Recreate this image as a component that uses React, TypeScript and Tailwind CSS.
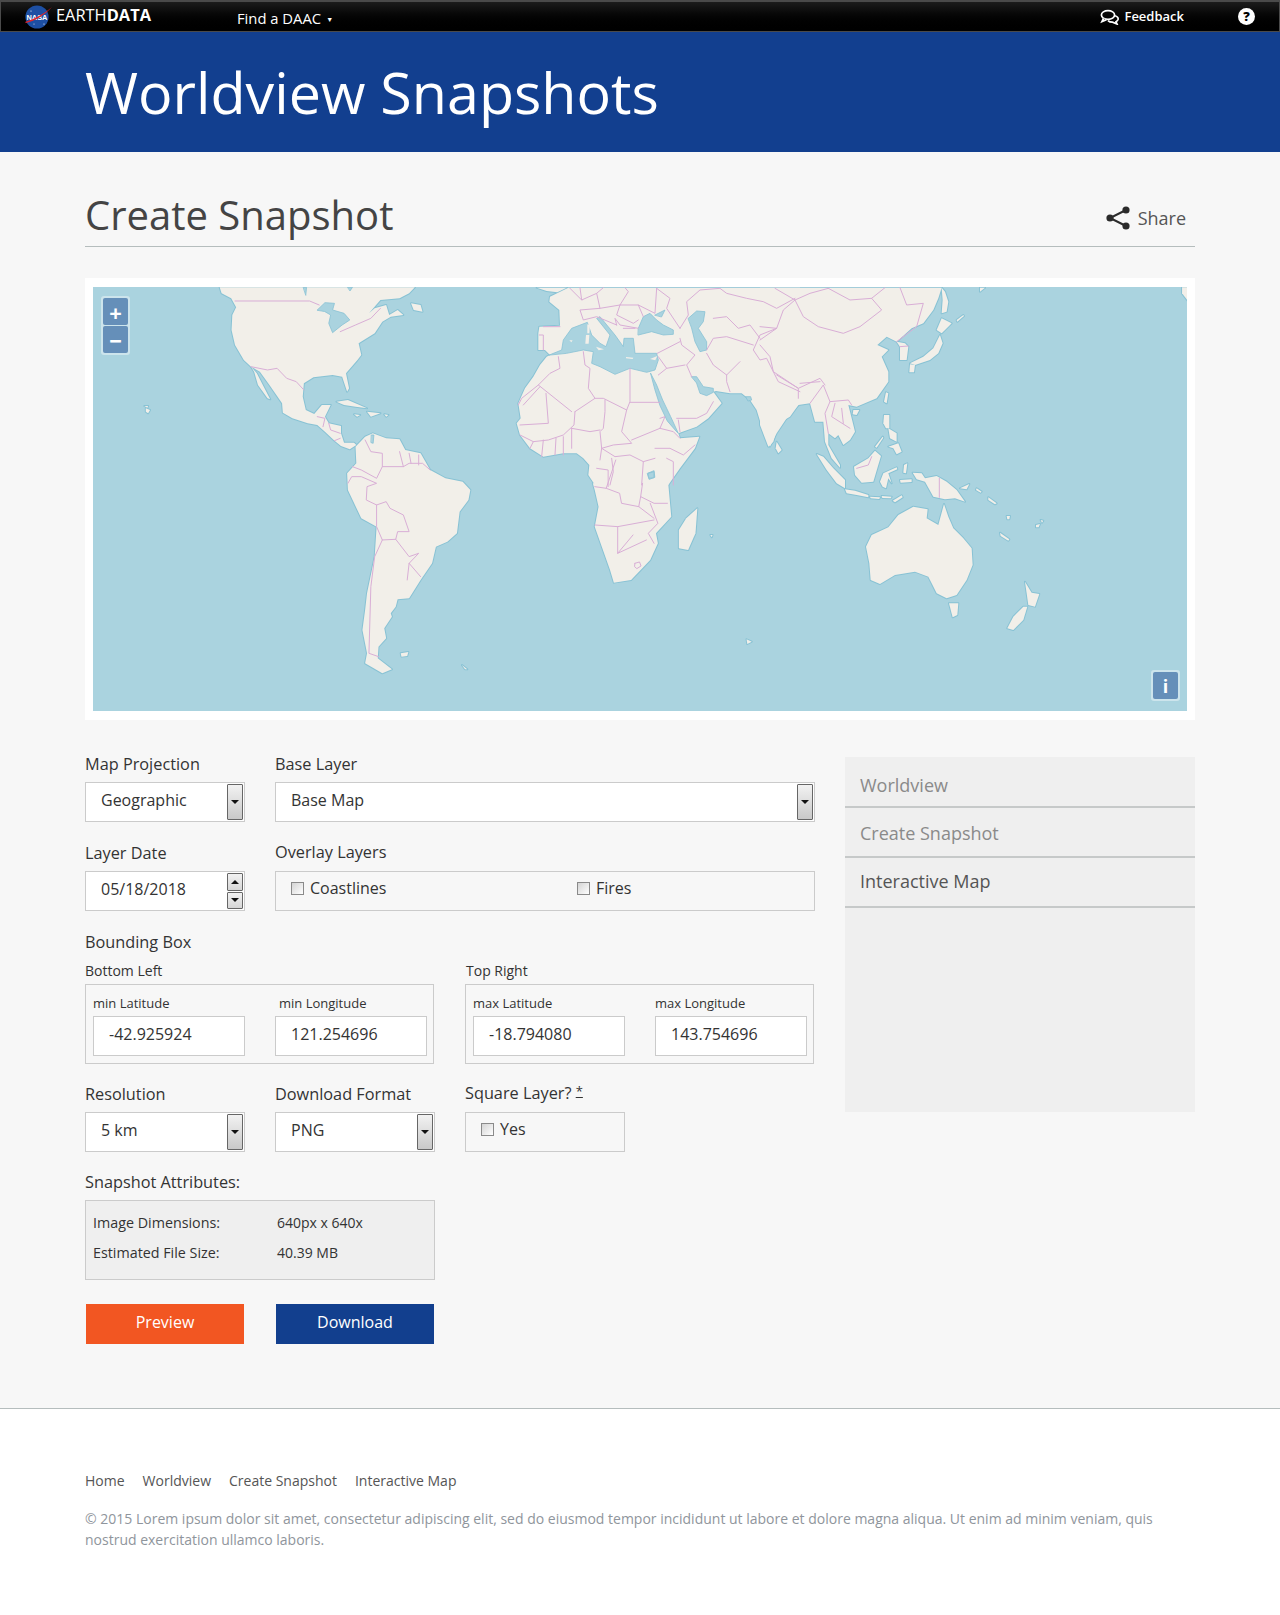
const FONT = "font-['Open_Sans',sans-serif]";

type MapGroup = {
  transform: string;
  land: string[];
  water: string[];
  borders: string[];
};

const mapGroups: MapGroup[] = [
  {
    // Americas and southern Africa
    transform: "translate(80 270) scale(0.3827 0.3333)",
    land: [
      "365,52 370,70 395,85 408,112 398,135 396,180 405,225 428,270 447,290 470,305 495,345 528,400 530,428 555,445 595,460 620,465 640,485 665,512 682,528 705,538 722,525 716,518 690,518 682,490 682,468 650,460 640,440 655,405 632,405 612,432 590,420 582,380 585,340 610,322 660,315 685,320 698,365 703,355 695,310 725,270 735,255 728,220 770,190 790,155 812,140 845,135 830,120 808,135 800,105 770,115 755,130 785,90 835,85 860,70 875,52",
      "447,290 462,310 480,350 497,388 490,385 465,345 455,305",
      "865,100 890,105 895,125 872,120",
      "670,395 700,390 750,415 720,410 690,405",
      "750,425 785,430 760,440",
      "716,433 732,435 724,440",
      "795,433 806,435 800,440",
      "172,415 183,420 178,430 172,425",
      "168,408 178,408 176,413",
      "838,1150 858,1146 855,1158 840,1160",
      "998,1185 1012,1198 1006,1198",
      "720,530 745,500 765,490 800,505 835,508 850,540 890,550 915,600 955,625 1000,635 1020,660 1015,690 992,725 985,790 960,815 930,830 920,880 890,930 860,985 830,988 825,1010 812,1030 815,1040 795,1075 800,1105 780,1130 778,1165 815,1198 790,1210 745,1180 750,1150 738,1080 745,1020 750,970 770,860 775,770 735,745 700,660 698,610 722,580",
      "1340,640 1345,660 1355,710 1345,770 1385,900 1395,938 1440,930 1490,870 1510,820 1505,790 1545,740 1537,640",
    ],
    water: [
      "620,120 640,98 665,100 660,120 690,130 705,150 685,165 660,188 650,160 655,135 640,125",
      "584,52 592,52 590,75",
      "700,52 712,52 706,62",
      "762,495 768,495 766,520 761,518",
      "1483,610 1500,602 1502,622 1488,628",
    ],
    borders: [
      "405,93 600,93 625,105",
      "680,185 720,165 760,145 785,115",
      "447,290 490,300 515,295 540,325 565,335 585,360",
      "620,440 640,445 635,470",
      "650,460 655,480 680,490",
      "665,512 680,505",
      "745,510 760,545 790,550 790,590 845,590 835,545",
      "845,590 860,580 895,580 915,600",
      "860,550 865,580",
      "885,555 885,585",
      "790,590 775,625 735,600 712,590",
      "700,640 710,620 735,620 775,640 750,650 748,690 775,705 800,695 810,715 845,735 860,785 830,785 825,808 860,860 885,850 860,880 855,930",
      "860,880 890,920",
      "775,705 775,770 790,810 770,860 760,950 755,1150 780,1160",
      "825,808 790,810",
      "1345,650 1375,655 1410,670 1415,700 1460,710 1500,745",
      "1375,655 1400,570",
      "1345,765 1405,770 1500,750",
      "1405,770 1405,850 1480,810",
      "1470,640 1465,680 1500,700 1535,700",
      "1465,680 1460,710",
      "1490,700 1510,760 1485,790 1500,820",
      "1405,850 1445,795",
      "1350,595 1380,600 1380,650",
      "1450,880 1462,876 1466,888 1455,896 1449,890 1450,880",
    ],
  },
  {
    // Europe, Africa north, middle east
    transform: "translate(500 285) scale(0.3333)",
    land: [
      "205,8 150,35 148,50 178,75 180,122 118,125 115,145 115,195 135,195 150,210 140,215 120,240 100,275 75,310 55,355 62,400 50,415 60,450 90,490 130,515 190,505 230,505 250,520 268,540 265,570 285,600 505,600 540,550 585,490 598,455 540,460 535,445 590,425 625,400 665,355 640,320 648,318 690,325 725,325 750,345 770,375 790,440 810,485 830,445 860,400 900,355 900,8",
      "110,8 170,8 200,8 172,22 140,18",
      "830,470 845,495 835,505 827,490",
    ],
    water: [
      "148,210 185,195 190,165 215,130 262,112 275,150 300,175 318,185 330,150 290,100 300,95 345,150 370,185 372,160 400,160 405,205 470,205 475,225 465,255 440,262 390,250 345,268 300,245 275,235 280,200 250,195 200,205",
      "415,130 430,95 450,85 470,105 490,120 520,135 520,148 490,150 455,140 415,150",
      "465,90 495,75 485,95",
      "565,100 590,78 615,80 610,110 595,130 620,170 620,195 600,200 585,170 575,130",
      "452,265 470,300 488,345 512,395 535,445 528,438 502,408 480,362 465,315",
      "575,275 590,275 610,305 640,310 640,322 620,332 600,325 590,295",
      "445,565 462,560 462,578 448,580",
      "738,335 752,335 755,345 745,348",
    ],
    borders: [
      "175,215 180,250 150,265 115,300 65,340 55,360",
      "115,300 215,380",
      "120,305 70,360",
      "250,200 255,240 270,250 265,310 285,340 225,380",
      "390,250 390,350 380,375 310,340 285,340",
      "390,352 480,352",
      "138,325 145,415 60,420",
      "225,380 222,420 190,450 145,465 100,470 60,450",
      "315,345 315,380 310,430 300,440 305,490 300,525",
      "380,375 365,440 395,475 340,480 305,490",
      "215,430 270,440 300,435",
      "215,430 215,490",
      "168,460 165,510",
      "190,455 190,510",
      "480,400 495,395 480,430 395,465",
      "480,430 520,440 540,460",
      "465,490 510,490 550,510 585,480",
      "500,520 520,530 520,600",
      "305,490 345,515 390,510 430,530 465,520",
      "335,520 340,560 330,600",
      "430,530 425,600",
      "100,470 90,490",
      "130,465 125,515",
      "540,160 545,180 585,210 560,240 575,275",
      "472,205 540,170",
      "475,215 500,250 475,270",
      "500,250 555,240",
      "530,400 590,400 620,385 640,350",
      "535,405 540,440",
      "690,320 680,290 680,270 720,230",
      "680,270 640,240 620,205",
      "620,195 640,160 680,155 760,180",
      "640,100 680,95 715,130 750,120 780,160",
      "830,130 780,150 760,195 780,225 800,220 835,290 900,320",
      "540,130 565,90 560,50 600,15 660,10 680,25 740,40 790,50 830,70 885,40",
      "240,8 245,45 290,25 300,70 240,75 250,105 290,95 350,120",
      "300,70 360,60 415,60 430,95",
      "360,60 385,20 375,8",
      "415,60 465,85 470,10",
      "290,25 310,8",
      "350,120 345,100 360,120 415,130",
      "370,130 405,130",
      "360,60 350,90 400,115 415,105",
      "245,45 210,10",
      "470,10 510,40 500,70 540,130",
      "130,125 180,125",
      "118,150 130,150 130,195",
    ],
  },
  {
    // East Asia
    transform: "translate(760 285) scale(0.3333)",
    land: [
      "0,8 545,8 535,40 520,75 490,115 455,130 410,170 380,155 352,180 385,195 365,215 385,260 385,290 350,340 290,365 265,360 275,400 285,440 270,465 250,480 235,450 225,460 205,445 205,480 240,540 240,548 215,520 195,470 190,410 165,410 150,355 115,360 90,395 55,415 40,470 25,485 0,420",
      "410,170 435,175 445,185 440,225 420,225 420,185",
      "545,8 555,20 565,50 560,80 545,85 548,45",
      "545,100 575,115 565,125 545,145 530,135",
      "540,150 548,175 535,205 510,225 465,240 450,235 490,215 520,190 535,160",
      "450,238 465,240 462,262 448,262",
      "660,8 675,8 660,20",
      "378,322 385,325 380,355 372,350",
      "280,375 298,375 290,390 278,388",
      "372,390 388,390 388,430 378,430 370,415",
      "385,430 410,445 410,470 390,460",
      "385,485 415,475 425,500 410,508 400,490",
      "345,485 368,455 370,458 350,488",
      "590,105 610,90 612,93 592,110",
    ],
    water: [],
    borders: [
      "0,125 50,130 70,75 105,45 45,10",
      "105,45 130,95 175,125 250,145 300,125 365,75 335,40 375,8",
      "105,45 150,25 205,10",
      "205,10 270,45 335,40",
      "420,8 440,60 490,55 470,125 410,170",
      "0,165 50,130",
      "0,180 30,215 40,260 115,310 180,280 195,300",
      "50,270 115,310 115,340",
      "120,295 180,290",
      "150,355 190,300 210,350 265,345 275,360",
      "210,350 195,385 205,445",
      "225,355 215,395 270,430",
      "245,370 250,415",
      "420,185 445,183",
    ],
  },
  {
    // Indonesia and Oceania
    transform: "translate(800 440) scale(0.3333)",
    land: [
      "50,42 70,50 100,85 135,120 135,145 110,130 80,90",
      "135,148 165,152 205,165 205,172 170,165 140,160",
      "210,170 240,172 238,177 212,175",
      "245,168 275,170 272,175 247,174",
      "278,182 305,166 308,172 285,187",
      "162,80 205,55 225,32 243,48 232,85 220,125 185,128 165,105",
      "250,100 290,82 292,88 265,100 275,130 265,115 258,145 248,140 240,125",
      "300,120 335,118 335,126 302,128",
      "312,75 322,70 318,100 310,98",
      "338,98 365,100 375,115 410,108 440,125 470,150 495,185 465,175 435,178 400,170 375,125 350,118",
      "480,145 508,132 500,148",
      "530,145 545,155 542,158 528,150",
      "565,172 590,190 585,193 565,180",
      "198,320 215,285 265,262 295,225 340,200 383,208 380,235 415,255 432,192 445,230 460,265 490,295 515,325 518,375 500,420 470,465 440,475 410,460 395,430 385,410 345,395 285,405 240,432 212,420 208,370",
      "447,490 475,490 472,525 458,532",
      "675,425 695,458 718,462 705,500 685,495 680,460",
      "670,500 682,500 670,540 640,570 622,565 640,530",
      "600,278 628,298 625,302 602,288",
      "620,228 630,228 628,238 622,238",
      "708,255 720,252 716,262 708,262",
      "722,240 730,242 726,248",
    ],
    water: [],
    borders: ["170,85 205,75 215,50", "418,115 418,172"],
  },
  {
    // Madagascar and the top right corner
    transform: "translate(640 270) scale(0.37 0.3333)",
    land: [
      "155,715 150,790 130,840 105,835 105,780 125,745",
      "1465,52 1480,52 1480,92 1465,70",
      "288,1108 302,1115 290,1122",
      "190,795 196,795 194,802",
    ],
    water: [],
    borders: [],
  },
];

// drawn after the seas, in the Europe group's coordinates
const medIslands = [
  "258,150 268,150 266,176 256,176",
  "262,118 270,120 268,145 262,145",
  "288,185 312,193 296,196",
  "378,216 400,218 398,222 378,220",
  "450,222 472,213 466,226",
  "208,166 218,166 214,172",
];

const WorldMap = () => (
  <svg
    viewBox="93 287 1094 424"
    className="block h-[424px] w-[1094px] bg-[#aad3df] blur-[0.4px]"
    strokeLinejoin="round"
    strokeLinecap="round"
  >
    {mapGroups.map((g, i) => (
      <g key={i} transform={g.transform}>
        {g.land.map((p) => (
          <polygon key={p} points={p} fill="none" stroke="#88c2d4" strokeWidth={2} vectorEffect="non-scaling-stroke" />
        ))}
      </g>
    ))}
    {mapGroups.map((g, i) => (
      <g key={i} transform={g.transform}>
        {g.land.map((p) => (
          <polygon key={p} points={p} fill="#f2efe9" />
        ))}
      </g>
    ))}
    {mapGroups.map((g, i) => (
      <g key={i} transform={g.transform}>
        {g.water.map((p) => (
          <polygon key={p} points={p} fill="#aad3df" stroke="#88c2d4" strokeWidth={0.8} vectorEffect="non-scaling-stroke" />
        ))}
      </g>
    ))}
    <g transform="translate(500 285) scale(0.3333)">
      {medIslands.map((p) => (
        <polygon key={p} points={p} fill="#f2efe9" />
      ))}
    </g>
    {mapGroups.map((g, i) => (
      <g key={i} transform={g.transform}>
        {g.borders.map((p) => (
          <polyline key={p} points={p} fill="none" stroke="#d9aed6" strokeWidth={1} vectorEffect="non-scaling-stroke" />
        ))}
      </g>
    ))}
  </svg>
);

const NasaLogo = () => (
  <svg viewBox="0 0 28 24" className="h-6 w-7">
    <circle cx="12" cy="12" r="11.6" fill="#1d4fa3" />
    <circle cx="6" cy="6" r="0.6" fill="#fff" />
    <circle cx="19" cy="19" r="0.6" fill="#fff" />
    <circle cx="9" cy="19" r="0.5" fill="#fff" />
    <text x="12" y="14.5" textAnchor="middle" fontSize="7.4" fontWeight="700" fill="#fff" fontFamily="'Liberation Sans',sans-serif">
      NASA
    </text>
    <path d="M0 17 C9 14 19 9 27 2 C21 9 10 16 1 18 Z" fill="#e0252b" />
  </svg>
);

const FeedbackIcon = () => (
  <svg viewBox="0 0 20 16" className="h-4 w-5" fill="none" stroke="#fff" strokeWidth="1.7">
    <ellipse cx="8" cy="6" rx="6.6" ry="4.4" />
    <path d="M3.5 9.5 L2 12.5 L6.5 10.6" fill="#000" />
    <path d="M14 6.5 C17 7 18.6 8.6 18 10.6 C17.6 11.8 16.8 12.4 16 12.8 L17 15 L12.5 13.2 C10.5 13.2 9 12.6 8 11.6" />
  </svg>
);

const ShareIcon = () => (
  <svg viewBox="0 0 26 24" className="h-6 w-[26px]" fill="#2b2b2b" stroke="#2b2b2b" strokeWidth="2">
    <path d="M21 4 L5 12 L21 20" fill="none" />
    <circle cx="21" cy="4" r="2.6" />
    <circle cx="5" cy="12" r="2.6" />
    <circle cx="21" cy="20" r="2.6" />
  </svg>
);

const Arrow = ({ up }: { up?: boolean }) => (
  <svg viewBox="0 0 8 4" className="h-1 w-2" fill="#111">
    <path d={up ? "M0 4 L4 0 L8 4 Z" : "M0 0 L8 0 L4 4 Z"} />
  </svg>
);

const CaretButton = () => (
  <div className="m-px flex w-[16px] items-center justify-center rounded-[1px] border border-[#666] bg-linear-to-b from-[#f2f2f2] to-[#c9c9c9]">
    <Arrow />
  </div>
);

const SpinButtons = () => (
  <div className="m-px flex w-[16px] flex-col gap-px">
    <div className="flex flex-1 items-center justify-center rounded-[1px] border border-[#666] bg-linear-to-b from-[#f2f2f2] to-[#d6d6d6]">
      <Arrow up />
    </div>
    <div className="flex flex-1 items-center justify-center rounded-[1px] border border-[#666] bg-linear-to-b from-[#f2f2f2] to-[#d6d6d6]">
      <Arrow />
    </div>
  </div>
);

const Label = ({ text, high }: { text: React.ReactNode; high?: boolean }) => (
  <div className={`h-[25px] text-[16.3px] text-[#333] ${high ? "leading-[12px]" : "leading-[14px]"}`}>{text}</div>
);

const SelectBox = ({ value, width, spin }: { value: string; width: string; spin?: boolean }) => (
  <div className={`flex h-10 justify-between border border-[#cbcbcb] bg-white ${width}`}>
    <span className="pl-[15px] text-base leading-[34px] text-[#333]">{value}</span>
    {spin ? <SpinButtons /> : <CaretButton />}
  </div>
);

const Checkbox = ({ text, className }: { text: string; className?: string }) => (
  <div className={`flex items-center gap-[6px] text-base text-[#333] ${className ?? ""}`}>
    <span className="h-[13px] w-[13px] border border-[#8a8a8a] bg-linear-to-br from-[#d4d4d4] to-white" />
    <span className="leading-[13px]">{text}</span>
  </div>
);

const CoordField = ({ label, value, className }: { label: string; value: string; className?: string }) => (
  <div className="w-[152px]">
    <div className={`h-[24px] pt-[2px] text-[13px] leading-[18px] text-[#333] ${className ?? ""}`}>{label}</div>
    <div className="h-10 w-[152px] border border-[#cbcbcb] bg-white pl-[15px] text-base leading-[34px] text-[#333]">{value}</div>
  </div>
);

const sideItems = [
  { text: "Worldview", style: "h-[51px] pt-[16px] text-[#8a8a8a]" },
  { text: "Create Snapshot", style: "h-[50px] pt-[13px] text-[#8a8a8a]" },
  { text: "Interactive Map", style: "h-[50px] pt-[11px] text-[#555]" },
];

const footerLinks = ["Home", "Worldview", "Create Snapshot", "Interactive Map"];

export default function App() {
  return (
    <div className={`flex h-[1615px] w-[1280px] flex-col overflow-hidden bg-[#f7f7f7] ${FONT}`}>
      <div className="flex h-8 items-center justify-between border border-t-2 border-[#4a4a4a] bg-linear-to-b from-[#1c1c1c] to-black pl-6 pr-[24px] text-white">
        <div className="flex items-center">
          <NasaLogo />
          <span className="ml-[3px] mb-[2px] text-[16.4px] leading-none">
            EARTH<b>DATA</b>
          </span>
          <span className="ml-[86px] mt-[3px] text-[14.8px] leading-none">Find a DAAC</span>
          <span className="ml-[5px] mt-[6px] text-[7px] leading-none">▼</span>
        </div>
        <div className="flex items-center">
          <FeedbackIcon />
          <span className="ml-[4px] text-[13px] font-semibold leading-none">Feedback</span>
          <div className="ml-[54px] flex h-[17px] w-[17px] items-center justify-center rounded-full bg-white text-[13px] font-extrabold leading-none text-black">
            ?
          </div>
        </div>
      </div>

      <div className="h-[120px] bg-[#123f8f] pl-[85px] pt-[24px]">
        <h1 className="text-[57.4px] leading-[72px] text-white">Worldview Snapshots</h1>
      </div>

      <div className="flex-1 px-[85px]">
        <div className="flex h-[95px] items-end justify-between border-b border-[#b5bdbd] pb-[4px]">
          <h2 className="text-[40px] leading-[54px] text-[#444]">Create Snapshot</h2>
          <div className="mb-[12px] flex items-center pr-[9px]">
            <ShareIcon />
            <span className="ml-[7px] text-[18px] leading-6 text-[#555]">Share</span>
          </div>
        </div>

        <div className="relative mt-[31px] bg-white px-2 py-[9px]">
          <WorldMap />
          <div className="absolute left-[16px] top-[18px] flex flex-col gap-[1px] rounded-[3px] bg-white/40 p-[2px]">
            <div className="flex h-[27px] w-[25px] items-center justify-center rounded-[2px] bg-[#658fb9] text-[22px] font-bold leading-none text-white">+</div>
            <div className="flex h-[27px] w-[25px] items-center justify-center rounded-[2px] bg-[#658fb9] text-[22px] font-bold leading-none text-white">−</div>
          </div>
          <div className="absolute bottom-[19px] right-[15px] rounded-[3px] bg-white/40 p-[2px]">
            <div className="flex h-[27px] w-[25px] items-center justify-center rounded-[2px] bg-[#658fb9] text-[18px] font-bold leading-none text-white">i</div>
          </div>
        </div>

        <div className="mt-[37px] flex gap-[30px]">
          <div className="flex w-[730px] flex-col">
            <div className="flex gap-[30px]">
              <div>
                <Label text="Map Projection" />
                <SelectBox value="Geographic" width="w-[160px]" />
              </div>
              <div>
                <Label text="Base Layer" />
                <SelectBox value="Base Map" width="w-[540px]" />
              </div>
            </div>

            <div className="mt-[24px] flex gap-[30px]">
              <div>
                <Label text="Layer Date" />
                <SelectBox value="05/18/2018" width="w-[160px]" spin />
              </div>
              <div>
                <Label text="Overlay Layers" high />
                <div className="flex h-10 w-[540px] border border-[#cbcbcb] pl-[15px] pt-[10px]">
                  <Checkbox text="Coastlines" className="h-[13px] w-[286px]" />
                  <Checkbox text="Fires" className="h-[13px]" />
                </div>
              </div>
            </div>

            <div className="mt-[24px] text-[16.3px] leading-[14px] text-[#333]">Bounding Box</div>

            <div className="mt-[15px] flex gap-[31px]">
              <div>
                <div className="h-[20px] text-sm leading-[14px] text-[#333]">Bottom Left</div>
                <div className="flex h-20 w-[349px] gap-[30px] border border-[#cbcbcb] px-[7px] pt-[7px]">
                  <CoordField label="min Latitude" value="-42.925924" />
                  <CoordField label="min Longitude" value="121.254696" className="pl-[4px]" />
                </div>
              </div>
              <div>
                <div className="h-[20px] pl-px text-sm leading-[14px] text-[#333]">Top Right</div>
                <div className="flex h-20 w-[349px] gap-[30px] border border-[#cbcbcb] px-[7px] pt-[7px]">
                  <CoordField label="max Latitude" value="-18.794080" />
                  <CoordField label="max Longitude" value="143.754696" />
                </div>
              </div>
            </div>

            <div className="mt-[23px] flex gap-[30px]">
              <div>
                <Label text="Resolution" />
                <SelectBox value="5 km" width="w-[160px]" />
              </div>
              <div>
                <Label text="Download Format" />
                <SelectBox value="PNG" width="w-[160px]" />
              </div>
              <div>
                <Label
                  high
                  text={
                    <>
                      Square Layer? <u className="relative -top-[3px] text-[13px]">*</u>
                    </>
                  }
                />
                <div className="h-10 w-[160px] border border-[#cbcbcb] pl-[15px] pt-[10px]">
                  <Checkbox text="Yes" className="h-[13px]" />
                </div>
              </div>
            </div>

            <div className="mt-[23px] h-[25px] text-[16.3px] leading-[14px] text-[#333]">Snapshot Attributes:</div>
            <div className="h-20 w-[350px] border border-[#cbcbcb] bg-[#efefef] px-[7px] pt-[14px] text-[14.3px] text-[#333]">
              <div className="flex h-[30px] leading-4">
                <span className="w-[184px]">Image Dimensions:</span>
                <span className="text-[14px]">640px x 640x</span>
              </div>
              <div className="flex h-[30px] leading-4">
                <span className="w-[184px]">Estimated File Size:</span>
                <span className="text-[14px]">40.39 MB</span>
              </div>
            </div>

            <div className="mt-[24px] flex gap-[32px] pl-px">
              <div className="h-10 w-[158px] bg-[#f25622] text-center text-base leading-[37px] text-white">Preview</div>
              <div className="h-10 w-[158px] bg-[#123f8e] text-center text-base leading-[37px] text-white">Download</div>
            </div>
          </div>

          <div className="h-[355px] w-[350px] bg-[#efefef]">
            {sideItems.map((item) => (
              <div
                key={item.text}
                className={`border-b-2 border-[#c6c9c9] pl-[15px] text-[18px] leading-6 ${item.style}`}
              >
                {item.text}
              </div>
            ))}
          </div>
        </div>
      </div>

      <div className="h-[207px] border-t border-[#b5bdbd] bg-white px-[85px] pt-[62px]">
        <div className="flex gap-[18px] text-sm leading-5 text-[#555]">
          {footerLinks.map((link) => (
            <span key={link}>{link}</span>
          ))}
        </div>
        <p className="mt-[17px] w-[1085px] text-sm leading-[21px] text-[#8f959c]">
          © 2015 Lorem ipsum dolor sit amet, consectetur adipiscing elit, sed do eiusmod tempor incididunt ut labore et dolore magna aliqua. Ut enim ad minim veniam, quis nostrud exercitation ullamco laboris.
        </p>
      </div>
    </div>
  );
}
